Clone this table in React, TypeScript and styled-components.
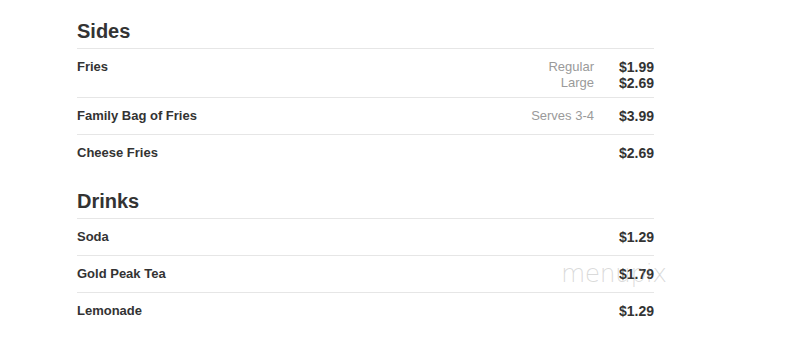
import styled, { createGlobalStyle } from "styled-components";

type Option = {
    label?: string;
    price: string;
};

type Item = {
    name: string;
    options: Option[];
};

type Section = {
    title: string;
    items: Item[];
};

const menu: Section[] = [
    {
        title: "Sides",
        items: [
            {
                name: "Fries",
                options: [
                    { label: "Regular", price: "$1.99" },
                    { label: "Large", price: "$2.69" },
                ],
            },
            { name: "Family Bag of Fries", options: [{ label: "Serves 3-4", price: "$3.99" }] },
            { name: "Cheese Fries", options: [{ price: "$2.69" }] },
        ],
    },
    {
        title: "Drinks",
        items: [
            { name: "Soda", options: [{ price: "$1.29" }] },
            { name: "Gold Peak Tea", options: [{ price: "$1.79" }] },
            { name: "Lemonade", options: [{ price: "$1.29" }] },
        ],
    },
];

const GlobalStyle = createGlobalStyle`
    html, body {
        margin: 0;
        padding: 0;
        background: #ffffff;
    }
    body {
        font-family: "Liberation Sans", Arial, sans-serif;
        color: #333333;
    }
`;

function App() {
    return (
        <Page>
            <GlobalStyle />
            <MenuColumn>
                {menu.map((section) => (
                    <MenuSection key={section.title}>
                        <SectionTitle>{section.title}</SectionTitle>
                        {section.items.map((item) => (
                            <ItemRow key={item.name}>
                                <ItemName>{item.name}</ItemName>
                                <OptionList>
                                    {item.options.map((option) => (
                                        <OptionLine key={option.price + (option.label || "")}>
                                            <OptionLabel>{option.label}</OptionLabel>
                                            <OptionPrice>{option.price}</OptionPrice>
                                        </OptionLine>
                                    ))}
                                </OptionList>
                            </ItemRow>
                        ))}
                    </MenuSection>
                ))}
            </MenuColumn>
            <Watermark>menupix</Watermark>
        </Page>
    );
}

export default App;

const Page = styled.div`
    position: relative;
    width: 794px;
    height: 357px;
    padding: 20px 0 0 77px;
    box-sizing: border-box;
    overflow: hidden;
`;

const MenuColumn = styled.div`
    width: 577px;
    display: flex;
    flex-direction: column;
    gap: 19px;
`;

const MenuSection = styled.section`
    display: flex;
    flex-direction: column;
`;

const SectionTitle = styled.h3`
    margin: 0;
    padding-bottom: 5px;
    font-size: 20px;
    line-height: 23px;
    font-weight: 700;
    color: #333333;
    border-bottom: 1px solid #e6e6e6;
`;

const ItemRow = styled.div`
    display: flex;
    justify-content: space-between;
    align-items: flex-start;
    min-height: 20px;
    padding: 10px 0 6px;
    border-bottom: 1px solid #e6e6e6;

    &:last-child {
        border-bottom: none;
    }
`;

const ItemName = styled.div`
    font-size: 13px;
    line-height: 16px;
    font-weight: 700;
    color: #333333;
`;

const OptionList = styled.div`
    display: flex;
    flex-direction: column;
`;

const OptionLine = styled.div`
    display: grid;
    grid-template-columns: 120px 60px;
    align-items: center;
    font-size: 13px;
    line-height: 16px;
`;

const OptionLabel = styled.span`
    text-align: right;
    color: #9a9a9a;
`;

const OptionPrice = styled.span`
    text-align: right;
    font-size: 14px;
    font-weight: 700;
    color: #333333;
`;

const Watermark = styled.div`
    position: absolute;
    left: 561px;
    top: 259px;
    font-family: "DejaVu Sans", sans-serif;
    font-size: 25px;
    font-weight: 200;
    letter-spacing: -0.5px;
    color: rgba(150, 150, 150, 0.35);
    pointer-events: none;
`;
